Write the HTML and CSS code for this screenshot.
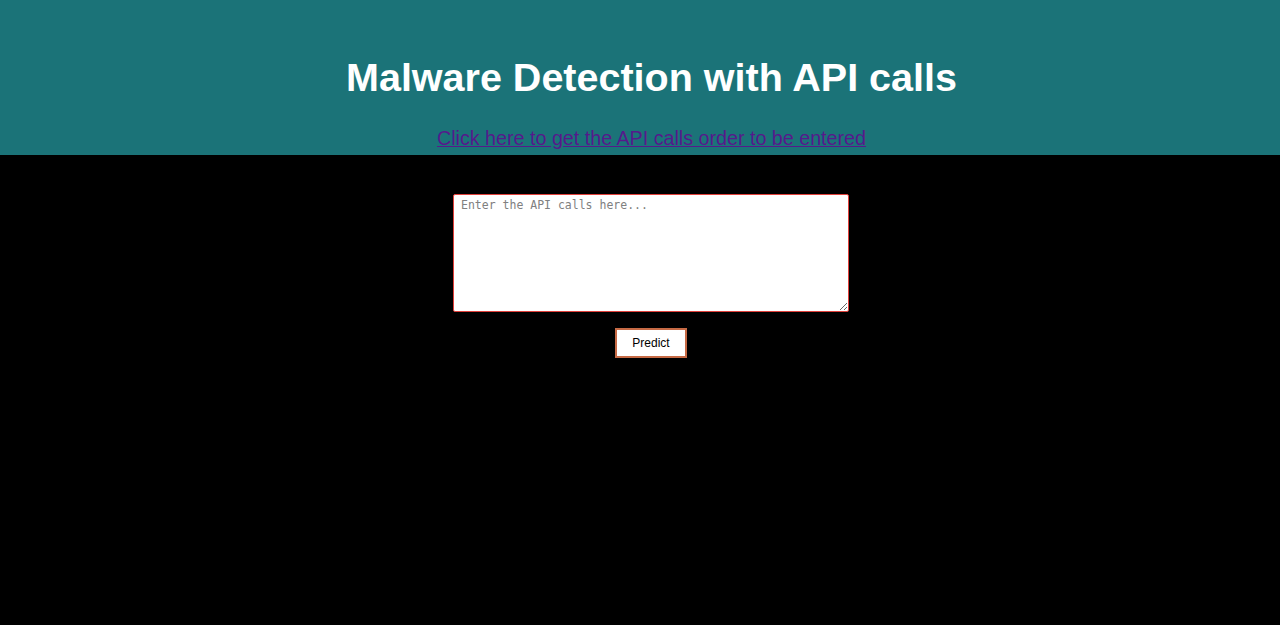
FILE: index.html
```html
<!DOCTYPE html>
<html>
<head>
    <title>Malware Detection</title>
    <link rel="stylesheet" href="styles.css">
</head>
<body>
    <div class="header">
        <h1>Malware Detection with API calls</h1>
        <p class="link-row">
            <a href="#">Click here to get the API calls order to be entered</a>
        </p>
    </div>
    <form class="predict-form">
        <textarea name="calls" placeholder="Enter the API calls here..."></textarea>
        <button type="submit">Predict</button>
    </form>
</body>
</html>
```

FILE: styles.css
```css
body {
    margin: 0;
    background-color: #000;
    font-family: "Liberation Sans", Arial, sans-serif;
}
.header {
    background-color: #1b7378;
    text-align: center;
    padding: 55px 0 6px 23px;
}
h1 {
    margin: 0;
    color: #fff;
    font-size: 39.5px;
    line-height: 44px;
}
.link-row {
    margin: 28px 0 0;
    font-size: 19.7px;
    line-height: 22px;
}
.link-row a {
    color: #551a8b;
}
.predict-form {
    display: flex;
    flex-direction: column;
    align-items: center;
    padding: 39px 0 0 22px;
}
textarea {
    box-sizing: border-box;
    width: 396px;
    height: 118px;
    padding: 3px 7px;
    border: 1px solid #e0403a;
    border-radius: 2px;
    font-family: "DejaVu Sans Mono", monospace;
    font-size: 11.5px;
    background: #fff;
}
textarea::placeholder {
    color: #808080;
}
button {
    margin-top: 16px;
    width: 72px;
    height: 30px;
    background: #fff;
    border: 2px solid #c66a45;
    font-family: "Liberation Sans", Arial, sans-serif;
    font-size: 12px;
    color: #000;
    cursor: pointer;
}
```
